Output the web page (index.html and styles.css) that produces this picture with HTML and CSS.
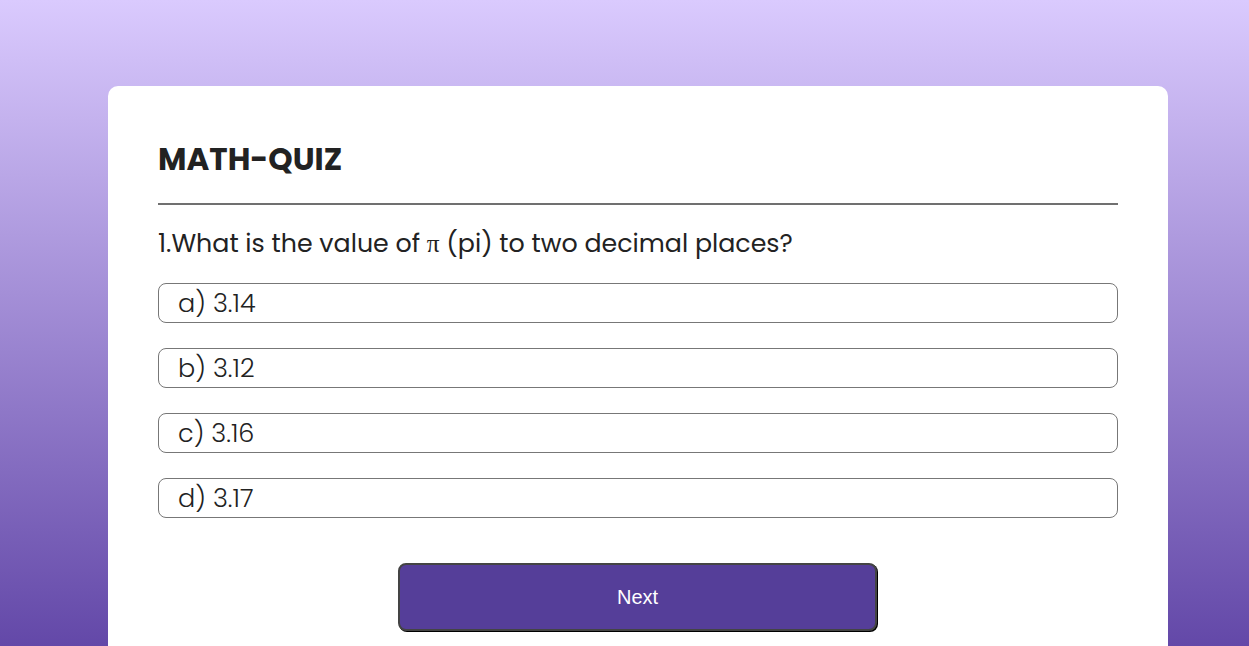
FILE: index.html
```html
<!DOCTYPE html>
<html lang="en">
<head>
<meta charset="utf-8">
<title>Math Quiz</title>
<link rel="stylesheet" href="styles.css">
</head>
<body>
<div class="app">
  <h1 class="title">MATH-QUIZ</h1>
  <div class="quiz">
    <h2 class="question">1.What is the value of <span class="pi">π</span> (pi) to two decimal places?</h2>
    <div class="answers">
      <button class="btn">a) 3.14</button>
      <button class="btn">b) 3.12</button>
      <button class="btn">c) 3.16</button>
      <button class="btn">d) 3.17</button>
    </div>
    <button class="next">Next</button>
  </div>
</div>
</body>
</html>
```
FILE: styles.css
```css
* { box-sizing: border-box; margin: 0; padding: 0; }
html, body { height: 100%; }
body {
  font-family: "Poppins", "Open Sans", sans-serif;
  background: linear-gradient(#dacafe, #6348a8);
  min-height: 646px;
  overflow: hidden;
}
.app {
  background: #fff;
  width: 1060px;
  margin: 86px 0 0 108px;
  border-radius: 10px;
  padding: 50px 50px 30px;
}
.title {
  font-size: 31px;
  font-weight: 700;
  color: #222;
  line-height: 46px;
  padding-bottom: 21px;
  border-bottom: 2px solid #707070;
}
.quiz { padding-top: 20px; }
.question {
  font-size: 25.3px;
  font-weight: 400;
  color: #222;
  line-height: 37px;
}
.pi { font-family: "Liberation Serif", serif; }
.answers {
  display: flex;
  flex-direction: column;
  gap: 25px;
  margin-top: 21px;
}
.btn {
  background: #fff;
  color: #222;
  font-family: inherit;
  font-size: 25.5px;
  font-weight: 300;
  text-align: left;
  height: 40px;
  padding: 0 19px;
  border: 1px solid #777;
  border-radius: 8px;
}
.next {
  display: block;
  width: 479px;
  height: 68px;
  margin: 45px 0 0 240px;
  background: #553e99;
  color: #fff;
  font-family: "Liberation Sans", Arial, sans-serif;
  font-size: 20px;
  border: 2px solid #444;
  border-radius: 8px;
  box-shadow: 1px 1px 0 #000;
}
```
